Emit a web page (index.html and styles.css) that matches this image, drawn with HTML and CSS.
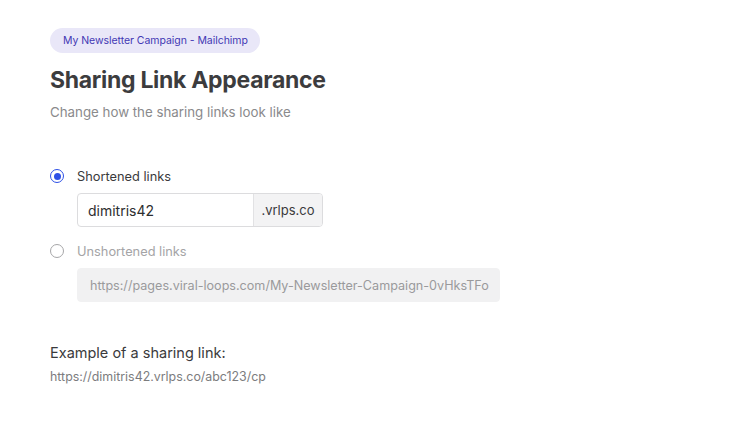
FILE: index.html
```html
<!DOCTYPE html>
<html>
<head>
<meta charset="utf-8">
<link rel="stylesheet" href="styles.css">
</head>
<body>
<main class="page">
  <span class="pill">My Newsletter Campaign - Mailchimp</span>
  <h1 class="title">Sharing Link Appearance</h1>
  <p class="subtitle">Change how the sharing links look like</p>

  <div class="options">
    <label class="option">
      <span class="radio radio-on"></span>
      <span class="option-label">Shortened links</span>
    </label>
    <div class="field">
      <span class="field-input">dimitris42</span>
      <span class="field-suffix">.vrlps.co</span>
    </div>

    <label class="option option-off">
      <span class="radio"></span>
      <span class="option-label">Unshortened links</span>
    </label>
    <div class="field field-disabled">
      <span class="field-input">https://pages.viral-loops.com/My-Newsletter-Campaign-0vHksTFo</span>
    </div>
  </div>

  <div class="example">
    <p class="example-title">Example of a sharing link:</p>
    <p class="example-url">https://dimitris42.vrlps.co/abc123/cp</p>
  </div>
</main>
</body>
</html>
```
FILE: styles.css
```css
* { box-sizing: border-box; }
html, body { margin: 0; padding: 0; background: #fff; }
body {
  font-family: Inter, "Noto Sans", sans-serif;
  color: #3a3a3c;
}
.page {
  padding: 28px 50px;
  display: flex;
  flex-direction: column;
  align-items: flex-start;
}
.pill {
  display: inline-block;
  height: 25px;
  line-height: 25px;
  padding: 0 12px 0 13px;
  border-radius: 13px;
  background: #e9e7f8;
  color: #4338b4;
  font-size: 10.5px;
  letter-spacing: -0.05px;
}
.title {
  margin: 12px 0 0;
  font-size: 23px;
  line-height: 30px;
  font-weight: 700;
  color: #3c3c3e;
  letter-spacing: -0.3px;
}
.subtitle {
  margin: 8px 0 0;
  font-size: 13.3px;
  line-height: 18px;
  color: #8a8a8c;
}
.options {
  margin-top: 47px;
  display: flex;
  flex-direction: column;
}
.option {
  display: flex;
  align-items: center;
  gap: 13px;
  height: 16px;
}
.option-label {
  font-size: 12.8px;
  color: #3a3a3c;
}
.option-off .option-label { color: #a4a4a6; }
.radio {
  width: 14px;
  height: 14px;
  border-radius: 50%;
  border: 1.5px solid #a6a6a8;
  display: flex;
  align-items: center;
  justify-content: center;
  flex: none;
}
.radio-on {
  border: 1.5px solid #2d50e6;
}
.radio-on::after {
  content: "";
  width: 7px;
  height: 7px;
  border-radius: 50%;
  background: #2d50e6;
}
.field {
  margin: 9px 0 16px 27px;
  display: flex;
  height: 34px;
  width: 246px;
  border: 1px solid #dcdcde;
  border-radius: 4px;
  overflow: hidden;
  align-self: flex-start;
}
.field-input {
  flex: 1;
  display: flex;
  align-items: center;
  padding-left: 10px;
  font-size: 14px;
  color: #2e2e30;
}
.field-suffix {
  width: 69px;
  display: flex;
  align-items: center;
  justify-content: center;
  background: #f3f3f4;
  border-left: 1px solid #e2e2e4;
  font-size: 13px;
  color: #3a3a3c;
}
.field-disabled {
  width: 423px;
  margin-bottom: 0;
  background: #f1f1f2;
  border-color: #f1f1f2;
  margin-top: 9px;
}
.field-disabled .field-input {
  padding-left: 12px;
  font-size: 12.6px;
  color: #9a9a9c;
}
.example {
  margin-top: 42px;
}
.example-title {
  margin: 0;
  font-size: 14.5px;
  line-height: 18px;
  color: #3a3a3c;
}
.example-url {
  margin: 6px 0 0;
  font-size: 12.4px;
  line-height: 18px;
  color: #7c7c7e;
}
```
